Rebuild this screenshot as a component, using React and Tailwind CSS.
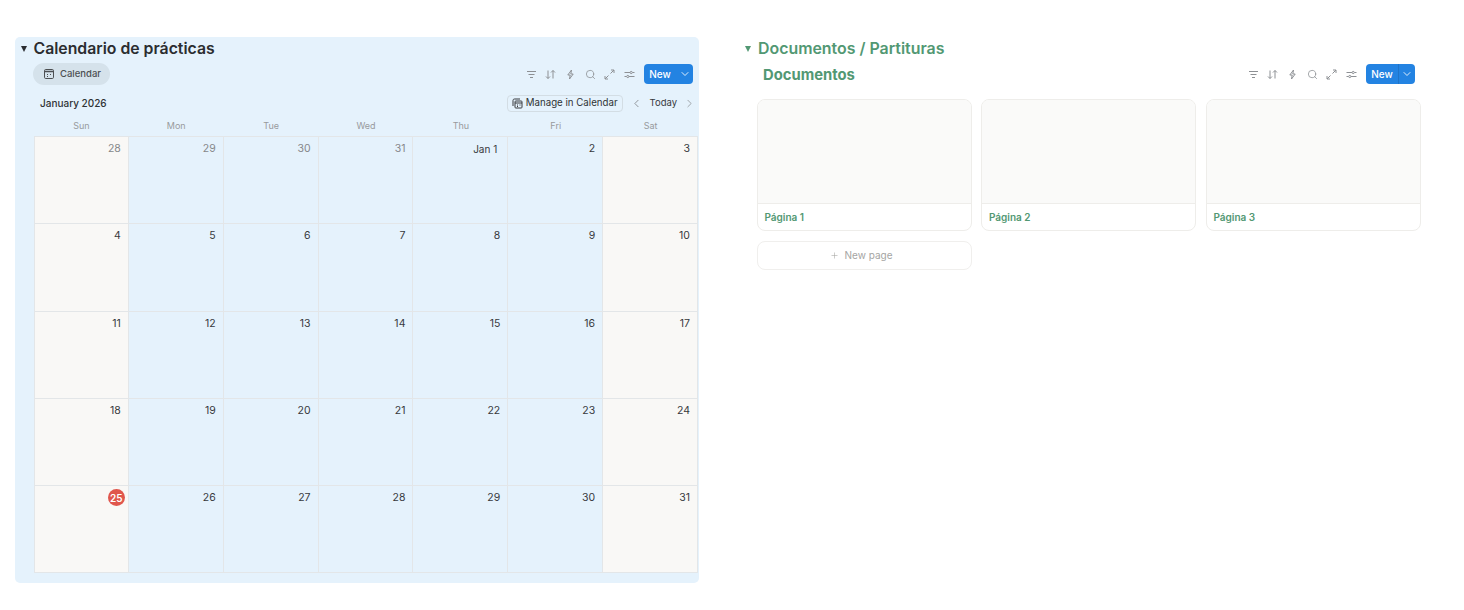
import React from "react";
import { ChevronDown, ChevronLeft, ChevronRight, Plus, Search } from "lucide-react";

const FilterIcon = () => (
  <svg width="11" height="11" viewBox="0 0 11 11" fill="none" stroke="currentColor" strokeWidth="1">
    <path d="M1 2.500h9M2.500 5.500h6M4 8.500h3" />
  </svg>
);
const SortIcon = () => (
  <svg width="11" height="11" viewBox="0 0 11 11" fill="none" stroke="currentColor" strokeWidth="1">
    <path d="M3 1.500v8M1 7.500l2 2 2-2M8 9.500v-8M6 3.500l2-2 2 2" />
  </svg>
);
const BoltIcon = () => (
  <svg width="11" height="11" viewBox="0 0 11 11" fill="none" stroke="currentColor" strokeWidth="1">
    <path d="M6.500 1 2.800 6h2.400l-.7 4 3.700-5H5.800z" />
  </svg>
);
const ExpandIcon = () => (
  <svg width="11" height="11" viewBox="0 0 11 11" fill="none" stroke="currentColor" strokeWidth="1">
    <path d="M6.500 4.500 10 1M7 1h3v3M4.500 6.500 1 10M1 7v3h3" />
  </svg>
);
const SlidersIcon = () => (
  <svg width="11" height="11" viewBox="0 0 11 11" fill="none" stroke="currentColor" strokeWidth="1">
    <path d="M.5 3.500h5.500M8.500 3.500h2M.5 7.500h2M5 7.500h5.500" />
    <circle cx="7.200" cy="3.500" r="1.100" />
    <circle cx="3.800" cy="7.500" r="1.100" />
  </svg>
);
const CalendarIcon = () => (
  <svg width="12" height="12" viewBox="0 0 12 12" fill="none" stroke="currentColor">
    <rect x="1.500" y="1.500" width="9" height="9" rx="1.200" strokeWidth="1" />
    <path d="M1.500 3.500h9" strokeWidth="1.500" />
    <path d="M4 6.500h1M7 6.500h1M4 8.500h1" strokeWidth="1" />
  </svg>
);
const ManageIcon = () => (
  <svg width="11" height="11" viewBox="0 0 11 11" fill="none" stroke="currentColor" strokeWidth="1">
    <path d="M1 8V2.500C1 1.700 1.500 1 2.500 1H8" />
    <rect x="3" y="3" width="7" height="7" rx=".8" />
    <path d="M3 5h7M5 7h1M7.500 7h1M5 8.500h1" />
  </svg>
);

const Toolbar = ({ divider }) => (
  <div className="flex items-center">
    <div className="flex items-center gap-[8.700px] text-[#8d9094]">
      <FilterIcon />
      <SortIcon />
      <BoltIcon />
      <Search size={11} strokeWidth={1.700} />
      <ExpandIcon />
      <SlidersIcon />
    </div>
    <div className="ml-[9px] flex h-[20px] w-[49px] items-center rounded-[4px] bg-[#2383e2] text-[10px] font-medium text-white">
      <span className="flex-1 text-center">New</span>
      <span
        className={`flex h-full w-[17px] items-center justify-center border-l ${
          divider ? "border-[#1f74c8]" : "border-transparent"
        }`}
      >
        <ChevronDown size={12} strokeWidth={1.700} />
      </span>
    </div>
  </div>
);

const days = [
  [28, 29, 30, 31, "Jan 1", 2, 3],
  [4, 5, 6, 7, 8, 9, 10],
  [11, 12, 13, 14, 15, 16, 17],
  [18, 19, 20, 21, 22, 23, 24],
  [25, 26, 27, 28, 29, 30, 31],
];
const weekdays = ["Sun", "Mon", "Tue", "Wed", "Thu", "Fri", "Sat"];

const DayCell = ({ value, row, col }) => {
  const weekend = col === 0 || col === 6;
  const muted = row === 0 && col < 4;
  const today = value === 25 && col === 0;
  return (
    <div
      className={`flex h-[87.300px] justify-end border-r border-b border-[#e3e6e8] pr-[7px] pt-[5px] text-[10.500px] leading-[14px] ${
        weekend ? "bg-[#f9f8f6]" : "bg-[#e5f2fc]"
      } ${muted ? "text-[#85878a]" : "text-[#37393c]"} ${col === 0 ? "border-l" : ""}`}
    >
      {today ? (
        <span className="-mr-[4px] -mt-[2px] flex h-[17px] w-[17px] items-center justify-center rounded-full bg-[#e0564c] text-[10px] font-semibold text-white">
          {value}
        </span>
      ) : value === "Jan 1" ? (
        <span className="mr-[3px] text-[10px]">{value}</span>
      ) : (
        value
      )}
    </div>
  );
};

const Gallery = ({ title }) => (
  <div className="h-[132px] overflow-hidden rounded-[8px] border border-[#eeedea] bg-white">
    <div className="h-[104px] border-b border-[#eeedea] bg-[#fafaf9]" />
    <div className="pl-[7px] pt-[6px] text-[10px] font-semibold leading-[14px] text-[#529873]">{title}</div>
  </div>
);

export default function App() {
  return (
    <div className="flex h-[610px] w-[1464px] items-start bg-white pl-[15px] pt-[37px] font-['Inter',sans-serif]">
      <section className="h-[546px] w-[684px] rounded-[5px] bg-[#e5f2fc]">
        <div className="flex h-[23px] items-center">
          <span className="ml-[6px] h-0 w-0 border-x-[3.500px] border-t-[6px] border-x-transparent border-t-[#2b2d30]" />
          <h1 className="ml-[6.500px] text-[15.800px] font-semibold leading-[22px] text-[#2b2d30]">Calendario de prácticas</h1>
        </div>
        <div className="ml-[18px] mr-[6px] mt-[3px] flex h-[22px] items-center justify-between">
          <div className="flex h-[22px] items-center gap-[5px] rounded-full bg-[#d5e2eb] pl-[10px] pr-[9px] text-[9.500px] font-medium text-[#4c4f52]">
            <CalendarIcon />
            <span>Calendar</span>
          </div>
          <Toolbar />
        </div>
        <div className="ml-[25px] mr-[3px] mt-[8px] flex h-[20px] items-center justify-between">
          <span className="text-[10px] font-medium text-[#2f3235]">January 2026</span>
          <div className="flex items-center text-[10px] text-[#37393c]">
            <div className="flex h-[17px] items-center gap-[3px] rounded-[4px] border border-[#d3dde4] px-[4px]">
              <ManageIcon />
              <span className="text-[9.700px] text-[#2f3235]">Manage in Calendar</span>
            </div>
            <ChevronLeft className="ml-[7px] text-[#6f7174]" size={13} strokeWidth={1.300} />
            <span className="ml-[7px] text-[9.500px]">Today</span>
            <ChevronRight className="ml-[6px] text-[#85878a]" size={13} strokeWidth={1.300} />
          </div>
        </div>
        <div className="ml-[19px] mr-[1px] mt-[2px] grid h-[22px] grid-cols-7 border-b border-[#e3e6e8] text-center text-[9px] leading-[22px] text-[#989a9c]">
          {weekdays.map((d) => (
            <div key={d}>{d}</div>
          ))}
        </div>
        <div className="ml-[19px] mr-[1px] grid grid-cols-7">
          {days.map((week, row) =>
            week.map((value, col) => <DayCell key={`${row}-${col}`} value={value} row={row} col={col} />)
          )}
        </div>
      </section>

      <section className="ml-[46px] w-[676px]">
        <div className="flex h-[23px] items-center">
          <span className="h-0 w-0 border-x-[3.500px] border-t-[6px] border-x-transparent border-t-[#529873]" />
          <h1 className="ml-[7px] text-[15.900px] font-semibold leading-[22px] text-[#529873]">Documentos / Partituras</h1>
        </div>
        <div className="ml-[18px] mr-[6px] mt-[3px] flex h-[22px] items-center justify-between">
          <h2 className="mt-[2px] text-[14.800px] font-bold leading-[22px] text-[#529873]">Documentos</h2>
          <Toolbar divider />
        </div>
        <div className="ml-[11.500px] mt-[14px] grid w-[664px] grid-cols-3 gap-x-[9.500px] gap-y-[10px]">
          <Gallery title="Página 1" />
          <Gallery title="Página 2" />
          <Gallery title="Página 3" />
          <div className="flex h-[29px] items-center justify-center gap-[6px] rounded-[8px] border border-[#f0efed] pr-[6px] text-[10px] text-[#a5a5a3]">
            <Plus size={9} strokeWidth={1.500} />
            New page
          </div>
        </div>
      </section>
    </div>
  );
}
